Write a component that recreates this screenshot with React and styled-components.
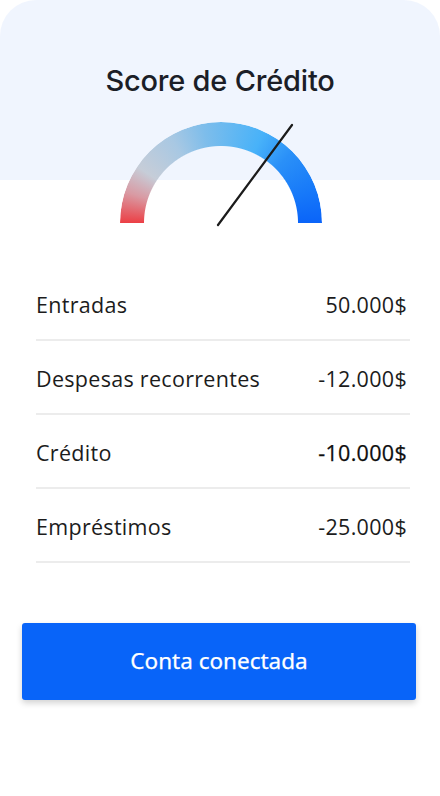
import React from "react";
import styled, { createGlobalStyle } from "styled-components";

const Global = createGlobalStyle`
  html, body { margin: 0; padding: 0; background: #ffffff; }
  body { font-family: "Open Sans", "Noto Sans", sans-serif; }
  * { box-sizing: border-box; }
`;

const Card = styled.div`
  width: 440px;
  height: 796px;
  border-radius: 36px 36px 0 0;
  background: linear-gradient(#f0f5fe 0, #f0f5fe 180px, #ffffff 180px);
  display: flex;
  flex-direction: column;
  padding-top: 61px;
  overflow: hidden;
`;

const Title = styled.h1`
  margin: 0;
  font-family: "Inter", "Lato", sans-serif;
  font-weight: 500;
  font-size: 29px;
  line-height: 40px;
  letter-spacing: -0.2px;
  color: #1b1e27;
  text-align: center;
`;

const GaugeWrap = styled.div`
  position: relative;
  width: 202px;
  height: 101px;
  margin: 21px 0 0 120px;
`;

const Arc = styled.div`
  width: 202px;
  height: 101px;
  border-radius: 101px 101px 0 0;
  background: conic-gradient(
    from -90deg at 50% 100%,
    #ec3f45 0deg,
    #d99aa3 18deg,
    #c6cdd8 34deg,
    #a8c8e3 60deg,
    #7dbdeb 80deg,
    #48b2f9 115deg,
    #2a90f8 135deg,
    #1779f9 160deg,
    #0a64f9 180deg
  );
  -webkit-mask: radial-gradient(circle at 50% 100%, transparent 76.5px, #000 77.5px);
  mask: radial-gradient(circle at 50% 100%, transparent 76.5px, #000 77.5px);
`;

const Needle = styled.svg`
  position: absolute;
  left: 0;
  top: 0;
  overflow: visible;
`;

const List = styled.div`
  margin: 44px 30px 0 36px;
  display: flex;
  flex-direction: column;
`;

const Row = styled.div`
  height: 74px;
  display: flex;
  align-items: center;
  justify-content: space-between;
  border-bottom: 2px solid #ececec;
  font-size: 21.5px;
  letter-spacing: 0.3px;
  color: #1c1c1c;
  padding: 2px 3px 0 0;
`;

const Label = styled.span`
  font-weight: 400;
`;

const Value = styled.span`
  font-weight: 400;
  color: ${(p) => (p.$strong ? "#0e0e0e" : "#1c1c1c")};
  -webkit-text-stroke: ${(p) => (p.$strong ? "0.25px #0e0e0e" : "0")};
`;

const Button = styled.button`
  margin: 60px 24px 0 22px;
  height: 77px;
  border: none;
  border-radius: 3px;
  background: #0864f9;
  color: #ffffff;
  font-family: "Noto Sans", "Open Sans", sans-serif;
  font-size: 22.5px;
  font-weight: 400;
  -webkit-text-stroke: 0.25px #ffffff;
  padding: 0 0 3px;
  box-shadow: 0 3px 6px rgba(0, 0, 0, 0.18);
  cursor: pointer;
`;

const rows = [
  { label: "Entradas", value: "50.000$" },
  { label: "Despesas recorrentes", value: "-12.000$" },
  { label: "Crédito", value: "-10.000$", strong: true },
  { label: "Empréstimos", value: "-25.000$" },
];

export default function App() {
  return (
    <>
      <Global />
      <Card>
        <Title>Score de Crédito</Title>
        <GaugeWrap>
          <Arc />
          <Needle width="202" height="106" viewBox="0 0 202 106">
            <line x1="98" y1="103" x2="172" y2="3" stroke="#1b1b1b" strokeWidth="2.2" strokeLinecap="round" />
          </Needle>
        </GaugeWrap>
        <List>
          {rows.map((r) => (
            <Row key={r.label}>
              <Label>{r.label}</Label>
              <Value $strong={r.strong}>{r.value}</Value>
            </Row>
          ))}
        </List>
        <Button>Conta conectada</Button>
      </Card>
    </>
  );
}
